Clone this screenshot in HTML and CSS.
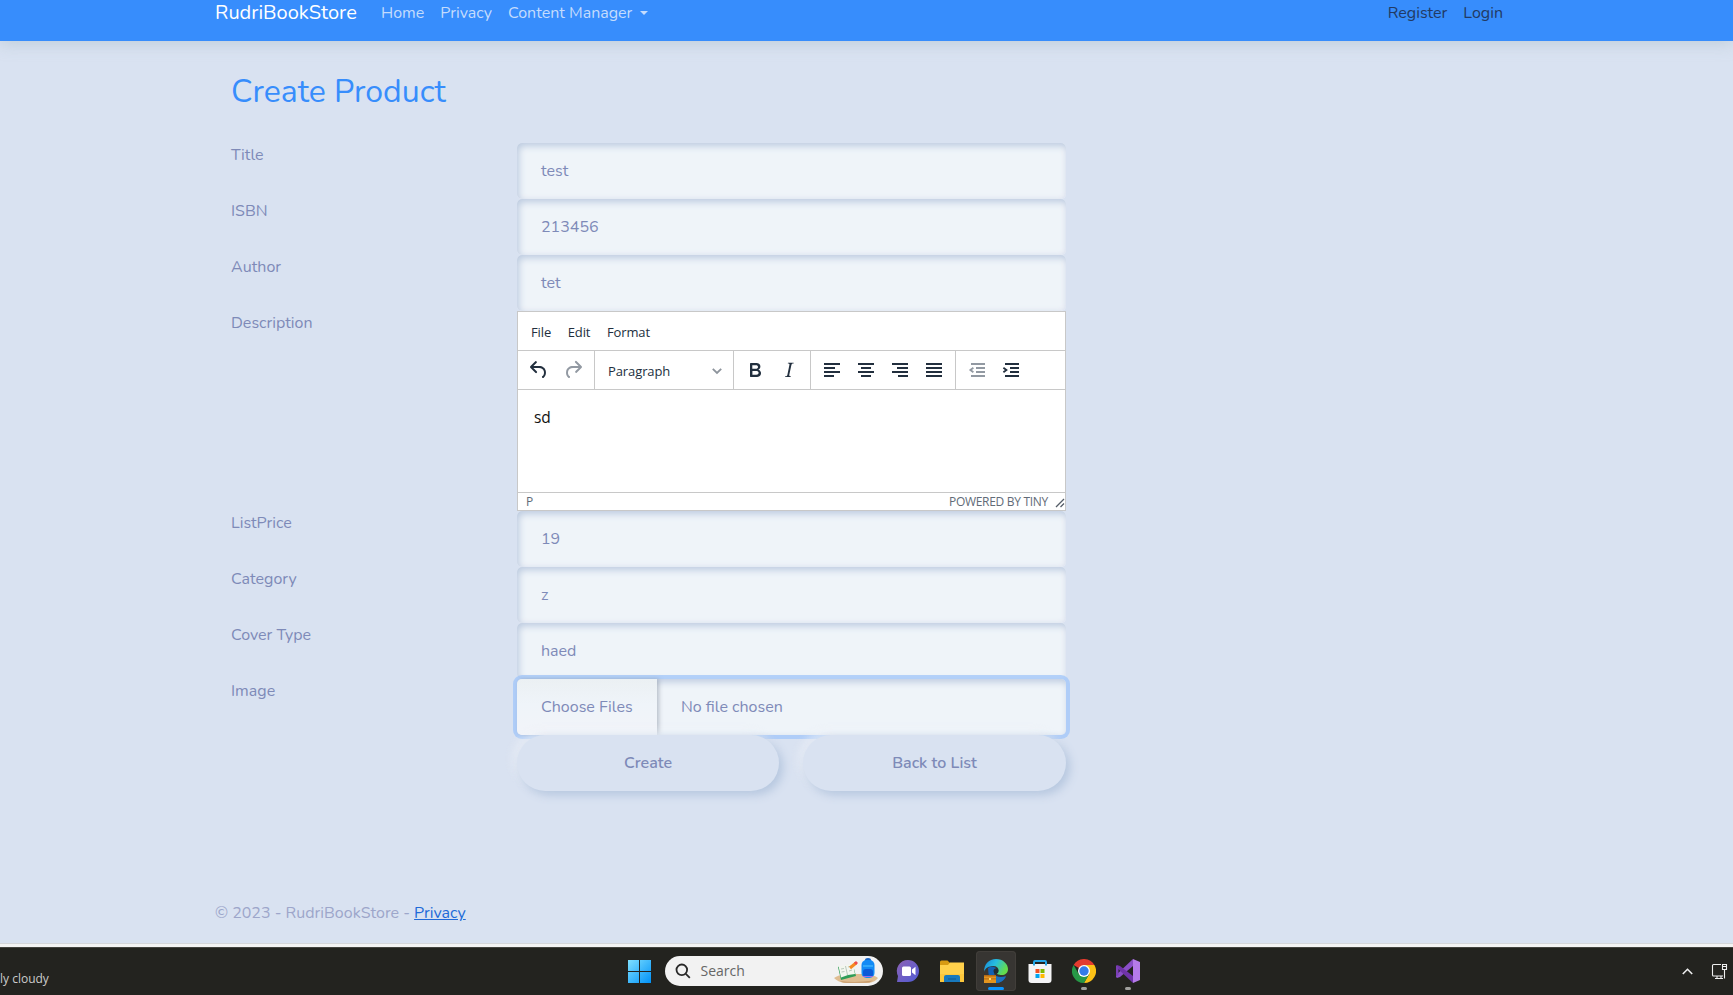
FILE: index.html
```html
<!DOCTYPE html>
<html lang="en">
<head>
<meta charset="utf-8">
<title>Create Product - RudriBookStore</title>
<link rel="stylesheet" href="styles.css">
</head>
<body>
<div class="page">
  <header class="navbar">
    <a class="brand">RudriBookStore</a>
    <nav class="nav-links"><a>Home</a><a>Privacy</a><a class="dropdown">Content Manager</a></nav>
    <nav class="nav-auth"><a>Register</a><a>Login</a></nav>
  </header>
  <main class="content">
    <h2 class="heading">Create Product</h2>
    <div class="row"><label class="label">Title</label><div class="field">test</div></div>
    <div class="row"><label class="label">ISBN</label><div class="field">213456</div></div>
    <div class="row"><label class="label">Author</label><div class="field">tet</div></div>
    <div class="row">
      <label class="label">Description</label>
      <div class="editor">
        <div class="menubar"><span>File</span><span>Edit</span><span>Format</span></div>
        <div class="toolbar">
          <div class="group history">
            <svg class="ico" viewBox="0 0 24 24"><path d="M6.4 8H12c3.7 0 6.2 2 6.8 5.1.6 2.7-.4 5.6-2.3 6.8a1 1 0 0 1-1-1.8c1.1-.6 1.8-2.7 1.4-4.6-.5-2.1-2.1-3.5-4.9-3.5H6.4l3.3 3.3a1 1 0 1 1-1.4 1.4l-5-5a1 1 0 0 1 0-1.4l5-5a1 1 0 0 1 1.4 1.4L6.4 8z"/></svg>
            <svg class="ico off" viewBox="0 0 24 24"><path d="M17.6 10H12c-2.8 0-4.4 1.4-4.9 3.5-.4 2 .3 4 1.4 4.6a1 1 0 1 1-1 1.8c-2-1.2-2.9-4.1-2.3-6.8.6-3 3-5.1 6.8-5.1h5.6l-3.3-3.3a1 1 0 1 1 1.4-1.4l5 5a1 1 0 0 1 0 1.4l-5 5a1 1 0 0 1-1.4-1.4l3.3-3.3z"/></svg>
          </div>
          <div class="group format"><span>Paragraph</span><svg class="chev" viewBox="0 0 10 10"><path d="M.8 2.800 5 7l4.200-4.200"/></svg></div>
          <div class="group style">
            <svg class="ico" viewBox="0 0 24 24"><path fill-rule="evenodd" d="M7.8 19c-.3 0-.5 0-.6-.2l-.2-.5V5.7c0-.2 0-.4.2-.5l.6-.2h5c1.5 0 2.7.3 3.5 1 .7.6 1.1 1.4 1.1 2.5a3 3 0 0 1-.6 1.9c-.4.6-1 1-1.6 1.2.4.1.9.3 1.3.6s.8.7 1 1.2c.4.4.5 1 .5 1.6 0 1.3-.4 2.3-1.3 3-.8.7-2.1 1-3.8 1H7.8zm5-8.3c.6 0 1.2-.1 1.6-.5.4-.3.6-.7.6-1.3 0-1.1-.8-1.7-2.3-1.7H9.3v3.5h3.4zm.5 6c.7 0 1.3-.1 1.7-.4.4-.4.6-.9.6-1.5s-.2-1-.7-1.4c-.4-.3-1-.4-2-.4H9.4v3.8h4z"/></svg>
            <svg class="ico" viewBox="0 0 24 24"><path d="m16.7 4.7-.1.9h-.3c-.6 0-1 0-1.4.3-.3.3-.4.6-.5 1.1l-2.1 9.8v.6c0 .5.4.8 1.4.8h.2l-.2.8H8l.2-.8h.2c1.1 0 1.8-.5 2-1.5l2-9.8.1-.5c0-.6-.4-.8-1.4-.8h-.3l.2-.9h5.8z"/></svg>
          </div>
          <div class="group align">
            <svg class="ico" viewBox="0 0 24 24"><path d="M4 5h16v2H4zM4 9h11v2H4zM4 13h16v2H4zM4 17h10v2H4z"/></svg>
            <svg class="ico" viewBox="0 0 24 24"><path d="M4 5h16v2H4zM7 9h10v2H7zM4 13h16v2H4zM7 17h10v2H7z"/></svg>
            <svg class="ico" viewBox="0 0 24 24"><path d="M4 5h16v2H4zM9 9h11v2H9zM4 13h16v2H4zM10 17h10v2H10z"/></svg>
            <svg class="ico" viewBox="0 0 24 24"><path d="M4 5h16v2H4zM4 9h16v2H4zM4 13h16v2H4zM4 17h16v2H4z"/></svg>
          </div>
          <div class="group indent">
            <svg class="ico off" viewBox="0 0 24 24"><path d="M6 5h14v2H6zM11 9h9v2h-9zM11 13h9v2h-9zM6 17h14v2H6z"/><path d="M8.400 9.800 5.400 12l3 2.200" fill="none" stroke="currentColor" stroke-width="1.800"/></svg>
            <svg class="ico" viewBox="0 0 24 24"><path d="M6 5h14v2H6zM11 9h9v2h-9zM11 13h9v2h-9zM6 17h14v2H6z"/><path d="m4.400 9.800 3 2.200-3 2.200" fill="none" stroke="currentColor" stroke-width="1.800"/></svg>
          </div>
        </div>
        <div class="edit-area">sd</div>
        <div class="statusbar"><span>P</span><span class="powered">POWERED BY TINY</span><svg class="grip" viewBox="0 0 10 10"><path d="M1 9 9 1M5.500 9 9 5.500"/></svg></div>
      </div>
    </div>
    <div class="row"><label class="label">ListPrice</label><div class="field">19</div></div>
    <div class="row"><label class="label">Category</label><div class="field">z</div></div>
    <div class="row"><label class="label">Cover Type</label><div class="field">haed</div></div>
    <div class="row"><label class="label">Image</label><div class="field file"><span class="choose">Choose Files</span><span class="chosen">No file chosen</span></div></div>
    <div class="actions"><a class="btn">Create</a><a class="btn">Back to List</a></div>
  </main>
  <footer class="footer">© 2023 - RudriBookStore - <a>Privacy</a></footer>
</div>
<div class="taskbar">
  <div class="weather">ly cloudy</div>
  <div class="apps">
    <svg class="win" viewBox="0 0 23 23"><defs><linearGradient id="w" x1="0" y1="0" x2="23" y2="23" gradientUnits="userSpaceOnUse"><stop stop-color="#7fe0ff"/><stop offset="1" stop-color="#0091f7"/></linearGradient></defs><path fill="url(#w)" d="M0 0h11v11H0zM12 0h11v11H12zM0 12h11v11H0zM12 12h11v11H12z"/></svg>
    <div class="search">
      <svg class="glass" viewBox="0 0 16 16"><circle cx="6.800" cy="6.800" r="5.300"/><path d="m10.800 10.800 4 4"/></svg>
      <span>Search</span>
      <svg class="art" viewBox="0 0 46 26"><path fill="#dfbd91" d="M1 20q4-3 12-4h20q9 1 12 4-3 4-9 5H11q-6-1-10-5z"/><path fill="#c79b6c" d="M7 23q16 2 33-.5-3 2.300-7 2.300H13q-4 0-6-1.800z"/><path fill="#2f9d57" d="m5 9 2-1 14 3 2 7-15 4z"/><path fill="#f3f6ee" d="m5.500 8 7-.5 7-2.500 2.500 11-7 1-7 2.500z"/><path stroke="#a9bcae" stroke-width=".8" fill="none" d="m12.500 8 2 9M8 11l3-.5M8.500 14l3-.5M15 9l3-1M16 13l3-1"/><path stroke="#f58a20" stroke-width="3" d="m17 10 6-5"/><path stroke="#ef4b4b" stroke-width="3" d="m22 5.800 2-1.800"/><path fill="#1766c9" d="M32 2q0-2 3-2t3 2v3h-6z"/><rect x="28.500" y="2" width="13" height="18" rx="5" fill="#138bf5"/><rect x="30" y="11" width="10" height="8" rx="3" fill="#0b59d7"/><path stroke="#52c6ff" fill="none" d="M30 8h10"/><path stroke="#a16ce5" fill="none" d="M30 18.500h10"/></svg>
    </div>
    <div class="app"><svg viewBox="0 0 24 24"><defs><linearGradient id="c" x2="1" y2="1"><stop stop-color="#8d62b4"/><stop offset="1" stop-color="#4f5bd5"/></linearGradient></defs><path fill="url(#c)" d="M12 1a11 11 0 1 1 0 22H1l1-6A11 11 0 0 1 12 1z"/><rect x="6" y="7.500" width="9" height="9.500" rx="1.500" fill="#fff"/><path fill="#fff" d="m16 10.500 3.500-2.800v8.600L16 13.500z"/></svg></div>
    <div class="app"><svg viewBox="0 0 24 24"><path fill="#d79a13" d="M0 3q0-1.500 1.500-1.500h6L10 4v4H0z"/><path fill="#ffd04b" d="M0 6h8l2-2.500h14V23H0z"/><path fill="#f9bd2e" d="M0 15h24v8H0z" opacity=".5"/><path fill="#1879bd" d="M4 23v-5q0-2 2-2h12q2 0 2 2v5z"/><path stroke="#0f5a94" d="M8 20h8"/></svg></div>
    <div class="app active"><svg viewBox="0 0 24 24"><defs><linearGradient id="e" x2="1" y2=".4"><stop stop-color="#1685d8"/><stop offset=".5" stop-color="#27bde0"/><stop offset="1" stop-color="#64dc4c"/></linearGradient></defs><path fill="#1160b3" d="M4 9q4-3 8 0l-2 5q1 6 12 4-4 6-10 6Q4 22 4 9z"/><path fill="url(#e)" d="M0 13C0 5 5 0 12 0s12 5 12 10c0 4-3 6-6 6-4 0-5-1-5-2 0-.8 1.500-1 1.500-3 0-2-2-4-5-4C5 7 1 9 0 13z"/><circle cx="12" cy="12" r="2.500" fill="#202c34"/><path fill="#1b71c0" d="M12 17q5 2 10 0-3 7-10 7z"/><path fill="#e3941f" d="M0 16h12v8H0z"/><path fill="#b56a17" d="M0 16h12v1.500H0z"/><path fill="#a75f12" d="M0 19.500h12v.8H0z"/><path fill="#ffd56a" d="M5 19h2v2H5z"/></svg><i class="run on"></i></div>
    <div class="app"><svg viewBox="0 0 24 24"><path fill="none" stroke="#25a7e8" stroke-width="2" d="M6 7V3q0-1 1-1h10q1 0 1 1v4"/><path fill="#f4f4f5" d="M.5 5h23v16q0 3-3 3h-17q-3 0-3-3z"/><path fill="#25a7e8" d="M5 5h2v1.500H5zM17 5h2v1.500h-2z"/><path fill="#f25022" d="M7.500 10h4v4h-4z"/><path fill="#7fba00" d="M12.500 10h4v4h-4z"/><path fill="#00a4ef" d="M7.500 15h4v4h-4z"/><path fill="#ffb900" d="M12.500 15h4v4h-4z"/></svg></div>
    <div class="app"><svg viewBox="0 0 24 24"><path fill="#e33b2e" d="M1.600 6A12 12 0 0 1 22.400 6H12v6z"/><path fill="#fbc116" d="M22.400 6A12 12 0 0 1 12 24l5.200-9L12 6z"/><path fill="#279847" d="M12 24A12 12 0 0 1 1.600 6l5.200 9H17.200z"/><circle cx="12" cy="12" r="6" fill="#fff"/><circle cx="12" cy="12" r="4.700" fill="#347be8"/></svg><i class="run"></i></div>
    <div class="app"><svg viewBox="0 0 24 24"><path fill="#b57be9" d="m17 0 7 3v18l-7 3z"/><path fill="#8a4fc7" d="M17 0v7L4 18l-3 1-1-1v-2z"/><path fill="#6f33a8" d="m0 7 1-1 3 1 13 10v7L0 8z"/><path fill="#7a3fb5" d="M0 6.500 2.500 8v8L0 17.500z"/></svg><i class="run"></i></div>
  </div>
  <div class="tray">
    <svg class="up" viewBox="0 0 11 7"><path d="m.8 6 4.700-4.700L10.200 6"/></svg>
    <svg class="net" viewBox="0 0 17 17"><path d="M10 1.500H2.500q-1 0-1 1V12q0 1 1 1H12M6 13v2.500m4-2.500v2.500M4 15.500h8M11.500 1.500h4v5h-4zM11.500 3.500h4M13.500 6.500v9"/></svg>
  </div>
</div>
</body>
</html>
```
FILE: styles.css
```css
* { box-sizing: border-box; }
body {
  margin: 0;
  height: 995px;
  overflow: hidden;
  display: flex;
  flex-direction: column;
  background: #d9e2f1;
  color: #7e8ab8;
  font: 400 16px/24px Nunito, Lato, "Liberation Sans", sans-serif;
}
svg { display: block; flex: none; }
.page { height: 944px; display: flex; flex-direction: column; }

.navbar {
  height: 41px;
  flex: none;
  display: flex;
  align-items: flex-start;
  padding: 1px 230px 0 215px;
  background: #378dfc;
  box-shadow: 0 2px 16px rgba(170, 190, 200, .6);
}
.brand { width: 166px; font-size: 20px; color: #fff; }
.nav-links, .nav-auth { display: flex; gap: 16px; }
.nav-links { color: #c4dcfd; }
.nav-auth { margin-left: auto; color: #223a63; }
.dropdown::after {
  content: "";
  display: inline-block;
  margin-left: 8px;
  vertical-align: 3px;
  border: 4px solid transparent;
  border-top-color: currentColor;
  border-bottom: 0;
}

.content { padding: 27px 0 0 231px; }
.heading { margin: 0 0 27px; height: 48px; font-size: 32px; line-height: 48px; font-weight: 400; color: #378dfc; }
.row { display: grid; grid-template-columns: 286px 549px; }
.field {
  height: 56px;
  padding: 16px 24px;
  border-radius: 5px;
  background: #eff4f9;
  box-shadow: inset 2px 3px 7px #bdcbe0, inset -2px -2px 4px #edf0f7;
}
.file {
  position: relative;
  display: flex;
  padding: 0;
  box-shadow: 0 0 0 4px rgba(160, 198, 249, .75), inset 2px 3px 7px #bdcbe0;
}
.choose { width: 140px; padding: 16px 0 0 24px; border-radius: 5px 0 0 5px; background: linear-gradient(#ebf0f3, #eff4f9 45%, #f2f4f9); box-shadow: 2px 0 4px rgba(130, 140, 155, .5); }
.chosen { padding: 16px 24px; }
.actions { position: relative; display: grid; grid-template-columns: 262px 263px; gap: 24px; margin-left: 286px; }
.btn {
  height: 56px;
  border-radius: 28px;
  background: #d9e2f1;
  text-align: center;
  line-height: 56px;
  font-weight: 600;
  box-shadow: 4px 4px 10px #b6c7df, -4px -4px 10px rgba(238, 241, 248, .65);
}

.editor {
  height: 200px;
  display: flex;
  flex-direction: column;
  border: 1px solid #c8c8c8;
  background: #fff;
  color: #222f3e;
  font: 13px/20px "Segoe UI", "Open Sans", sans-serif;
  letter-spacing: -.1px;
}
.menubar { height: 39px; display: flex; gap: 16.5px; padding: 10px 13px 0; border-bottom: 1px solid #c8c8c8; }
.toolbar { height: 39px; display: flex; border-bottom: 1px solid #c8c8c8; }
.group { display: flex; align-items: center; border-right: 1px solid #c8c8c8; }
.group:last-child { border-right: 0; }
.ico { width: 24px; height: 24px; fill: currentColor; }
.off { color: #9299a2; }
.history { width: 77px; padding-left: 9px; gap: 10px; }
.format { width: 139px; padding: 1px 11px 0 13px; justify-content: space-between; }
.chev { width: 10px; height: 10px; fill: none; stroke: #8d949c; stroke-width: 1.8; }
.style { width: 77px; padding-left: 9px; gap: 10px; }
.align { width: 145px; padding-left: 9px; gap: 10px; }
.indent { padding-left: 9px; gap: 10px; }
.edit-area { flex: 1; padding: 15px 16px; font-size: 15.5px; line-height: 24px; color: #111; }
.statusbar { height: 18px; display: flex; align-items: center; padding: 1px 0 0 8px; border-top: 1px solid #c8c8c8; font-size: 12px; letter-spacing: -.3px; color: #626b77; }
.powered { margin-left: auto; margin-right: 7px; }
.grip { width: 10px; height: 10px; margin-top: 2px; fill: none; stroke: #555d68; stroke-width: 1.3; }

.footer { margin: auto 0 19px 215px; color: #9da6ca; }
.footer a { color: #216ad8; text-decoration: underline; }

.taskbar {
  flex: 1;
  display: grid;
  grid-template-columns: 1fr 518px 1fr;
  border-top: 3px solid #f4f4f4;
  background: #23231f;
  box-shadow: inset 0 1px #44443f, 0 -1px #d5d7da;
  font-family: "Segoe UI", "Open Sans", sans-serif;
}
.weather { padding-top: 23px; font-size: 12px; line-height: 18px; color: #ccc; }
.apps { display: flex; align-items: flex-start; padding-top: 4px; margin-left: 20px; }
.win { width: 23px; height: 23px; margin: 9px 14px 0 0; }
.search { width: 218px; height: 30px; margin: 5px 3px 0 0; display: flex; flex: none; align-items: center; padding: 0 4px 0 10px; border-radius: 15px; background: #f2f2f2; font-size: 14px; color: #666; }
.search span { margin-left: 10px; }
.glass { width: 16px; height: 16px; fill: none; stroke: #292929; stroke-width: 1.8; }
.art { width: 46px; height: 26px; margin-left: auto; }
.app { position: relative; flex: none; width: 40px; height: 40px; margin: 0 2px; padding: 8px; border-radius: 4px; }
.app svg { width: 24px; height: 24px; }
.active { background: #373532; box-shadow: inset 0 0 0 1px #413e3a; }
.run { position: absolute; bottom: 1px; left: 17px; width: 6px; height: 3px; border-radius: 2px; background: #a0a09d; }
.run.on { left: 12px; width: 16px; background: #0a94ff; }
.tray { display: flex; align-items: flex-start; justify-content: flex-end; gap: 18px; padding: 16px 5px 0 0; }
.tray svg { fill: none; stroke: #eee; }
.up { width: 11px; height: 7px; margin-top: 5px; stroke-width: 1.6; }
.net { width: 17px; height: 17px; stroke-width: 1.1; }
```
